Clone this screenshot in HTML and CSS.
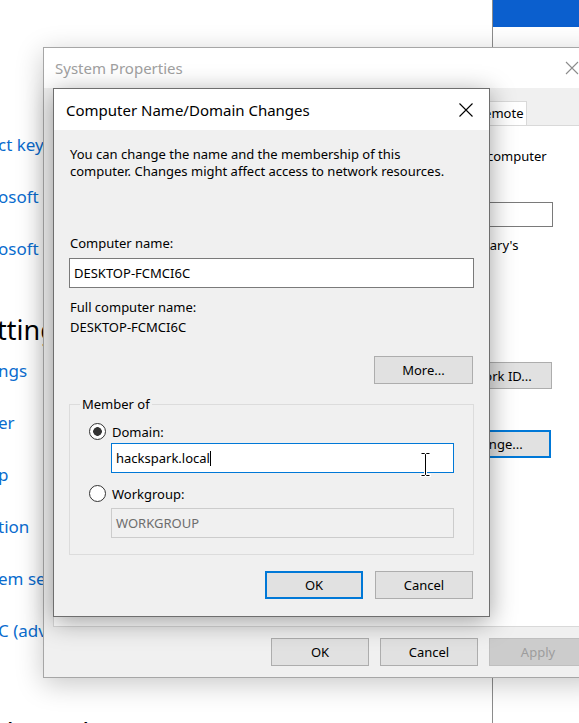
FILE: index.html
```html
<!DOCTYPE html>
<html lang="en">
<head>
<meta charset="utf-8">
<title>Computer Name/Domain Changes</title>
<link rel="stylesheet" href="styles.css">
</head>
<body>
<div class="desktop">
  <section class="settings">
    <span class="link">ct key or upgrade your edition of Windows</span>
    <span class="link">osoft Services Agreement that applies to our services</span>
    <span class="link">osoft Software License Terms</span>
    <h2 class="heading">ttings</h2>
    <span class="link">ngs</span>
    <span class="link">er</span>
    <span class="link">p</span>
    <span class="link">tion</span>
    <span class="link">em settings</span>
    <span class="link">C (advanced)</span>
    <h2 class="heading bottom">the web</h2>
  </section>
  <section class="other">
    <div class="other-head"></div>
  </section>
</div>

<div class="win sysprops">
  <div class="titlebar">
    <span class="title">System Properties</span>
    <span class="close"><svg width="14" height="14" viewBox="0 0 14 14"><path d="M1 1L13 13M13 1L1 13" stroke="#8c8c8c" stroke-width="1.1" fill="none"/></svg></span>
  </div>
  <div class="sp-body">
    <div class="tabs">
      <span class="tab t1">Computer Name</span>
      <span class="tab t2">Hardware</span>
      <span class="tab t3">Advanced</span>
      <span class="tab t4">System Protection</span>
      <span class="tab t5">Remote</span>
    </div>
    <div class="tabpanel">
      <p class="tp-text">computer</p>
      <input class="field tp-input" type="text" value="">
      <p class="tp-text tp-example">Mary's</p>
      <button class="btn tp-btn tp-netid">Network ID...</button>
      <button class="btn tp-btn default tp-change">Change...</button>
    </div>
    <div class="btn-row sp-buttons">
      <button class="btn">OK</button>
      <button class="btn">Cancel</button>
      <button class="btn" disabled>Apply</button>
    </div>
  </div>
</div>

<div class="win dialog">
  <div class="titlebar">
    <span class="title">Computer Name/Domain Changes</span>
    <span class="close"><svg width="14" height="14" viewBox="0 0 14 14"><path d="M0.5 0.5L13.5 13.5M13.5 0.5L0.5 13.5" stroke="#000" stroke-width="1.1" fill="none"/></svg></span>
  </div>
  <div class="dlg-body">
    <p class="desc">You can change the name and the membership of this<br>computer. Changes might affect access to network resources.</p>
    <label class="lbl cn-label">Computer name:</label>
    <div class="field cn-input">DESKTOP-FCMCI6C</div>
    <div class="lbl full-label">Full computer name:</div>
    <div class="lbl full-value">DESKTOP-FCMCI6C</div>
    <button class="btn more">More...</button>
    <fieldset class="group">
      <legend>Member of</legend>
      <label class="radio-row domain-row"><input type="radio" name="m" checked><span>Domain:</span></label>
      <div class="field focus sub-input"><span class="caret">hackspark.local</span></div>
      <label class="radio-row wg-row"><input type="radio" name="m"><span>Workgroup:</span></label>
      <div class="field disabled sub-input wg-input">WORKGROUP</div>
    </fieldset>
    <div class="btn-row dlg-buttons">
      <button class="btn default">OK</button>
      <button class="btn">Cancel</button>
    </div>
  </div>
</div>

<svg class="ibeam" width="11" height="25" viewBox="0 0 11 25">
  <path d="M1.5 1.5H4.5L5.5 2.5L6.5 1.5H9.5M5.5 2.5V22.5M1.5 23.5H4.5L5.5 22.5L6.5 23.5H9.5" stroke="#fff" stroke-width="3" fill="none" stroke-linecap="square"/>
  <path d="M1.5 1.5H4.5L5.5 2.5L6.5 1.5H9.5M5.5 2.5V22.5M1.5 23.5H4.5L5.5 22.5L6.5 23.5H9.5" stroke="#000" stroke-width="1" fill="none"/>
</svg>
</body>
</html>
```

FILE: styles.css
```css
* { box-sizing: border-box; }
html, body { margin: 0; padding: 0; }
body {
  width: 579px;
  height: 723px;
  overflow: hidden;
  position: relative;
  background: #fff;
  font-family: "Noto Sans", "Open Sans", sans-serif;
  font-size: 13px;
  color: #000;
}
p { margin: 0; }

/* background desktop */
.desktop { display: flex; height: 723px; }
.settings {
  width: 493px;
  flex: none;
  border-right: 1px solid #8c8c8c;
  overflow: hidden;
  white-space: nowrap;
  padding-top: 119px;
  display: flex;
  flex-direction: column;
}
.link {
  display: block;
  font-size: 17px;
  line-height: 52px;
  color: #0a6cce;
  margin-left: -2px;
}
.heading {
  font-size: 27px;
  font-weight: 400;
  line-height: 36px;
  margin: 37px 0 -3px -3px;
}
.heading.bottom { margin-top: 58px; }
.other { flex: 1; background: #fff; }
.other-head { height: 27px; background: #0b5fce; }

/* windows */
.win { position: absolute; background: #f0f0f0; display: flex; flex-direction: column; }
.titlebar {
  display: flex;
  align-items: center;
  justify-content: space-between;
  background: #fff;
  flex: none;
}
.close { width: 46px; display: flex; justify-content: center; align-items: center; }
.close svg { display: block; }

/* buttons & fields */
.btn {
  font: inherit;
  font-size: 13px;
  color: #000;
  background: #e1e1e1;
  border: 1px solid #adadad;
  padding: 0;
  height: 28px;
  width: 98px;
  white-space: nowrap;
}
.btn.default { border: 2px solid #0078d7; }
.btn:disabled { background: #cccccc; border-color: #bfbfbf; color: #9d9d9d; }
.btn-row { display: flex; justify-content: flex-end; }
.field {
  display: flex;
  align-items: center;
  background: #fff;
  border: 1px solid #7a7a7a;
  padding-left: 4px;
  line-height: 17px;
  font: inherit;
}

.sysprops {
  left: 43px;
  top: 47px;
  width: 560px;
  height: 631px;
  border: 1px solid #a6a6a6;
  box-shadow: 0 6px 26px rgba(0,0,0,0.22);
}
.sysprops .titlebar { height: 40px; padding-left: 11px; padding-right: 7px; }
.sysprops .title { font-size: 15px; color: #a0a0a0; }
.sp-body { padding: 13px 15px 0 9px; display: flex; flex-direction: column; }
.tabs { display: flex; height: 24px; }
.tab {
  height: 24px;
  line-height: 22px;
  border: 1px solid #d9d9d9;
  border-bottom: none;
  background: #fff;
  text-align: center;
  white-space: nowrap;
  overflow: hidden;
}
.t1 { width: 122px; }
.t2 { width: 76px; }
.t3 { width: 76px; }
.t4 { width: 144px; }
.t5 { width: 56px; padding: 0 4px; }
.tabpanel {
  height: 502px;
  background: #fff;
  border: 1px solid #d9d9d9;
  padding: 22px 0 0 433px;
  display: flex;
  flex-direction: column;
  align-items: flex-start;
  white-space: nowrap;
}
.tp-text { line-height: 17px; }
.tp-input { margin: 37px 0 0 -40px; width: 106px; height: 25px; }
.tp-example { margin: 10px 0 0 -9px; }
.btn.tp-btn { margin: 108px 0 0 -55px; width: 120px; height: 27px; }
.btn.tp-change { margin: 41px 0 0 -50px; width: 114px; height: 28px; }
.sp-buttons { padding-top: 11px; gap: 11px; }

/* dialog */
.dialog {
  left: 53px;
  top: 88px;
  width: 437px;
  height: 529px;
  border: 1px solid #6e6e6e;
  box-shadow: 0 5px 24px rgba(0,0,0,0.38);
}
.dialog .titlebar { height: 41px; padding-left: 12px; }
.dialog .title { font-size: 15px; }
.dlg-body {
  padding: 16px 16px 0 16px;
  display: flex;
  flex-direction: column;
}
.desc, .lbl { line-height: 17px; }
.cn-label { margin-top: 55px; }
.cn-input { margin: 6px -1px 0; height: 30px; }
.full-label { margin-top: 11px; }
.full-value { margin-top: 3px; }
.btn.more { align-self: flex-end; margin-top: 20px; width: 99px; }
.group {
  margin: 12px -1px 0;
  padding: 0 0 16px 0;
  border: 1px solid #dcdcdc;
  display: flex;
  flex-direction: column;
}
.group legend {
  margin-left: 10px;
  padding: 0 2px;
  line-height: 17px;
}
.radio-row {
  display: flex;
  align-items: center;
  gap: 6px;
  padding-left: 19px;
  height: 17px;
}
.domain-row { margin-top: 10px; }
.radio-row input {
  appearance: none;
  -webkit-appearance: none;
  margin: 0;
  width: 17px;
  height: 17px;
  border: 1px solid #333;
  border-radius: 50%;
  background: #fff;
}
.radio-row input:checked {
  background: radial-gradient(circle, #333 0 4px, #fff 4.6px);
}
.sub-input { margin: 3px 0 0 41px; width: 343px; height: 30px; }
.field.focus { border-color: #0078d7; }
.caret { border-right: 1px solid #000; padding-right: 0; line-height: 15px; }
.wg-row { margin-top: 12px; }
.wg-input { margin-top: 6px; }
.field.disabled { background: #f0f0f0; border-color: #cccccc; color: #6d6d6d; }
.dlg-buttons { margin-top: 16px; gap: 12px; }

.ibeam { position: absolute; left: 420px; top: 452px; }
```
